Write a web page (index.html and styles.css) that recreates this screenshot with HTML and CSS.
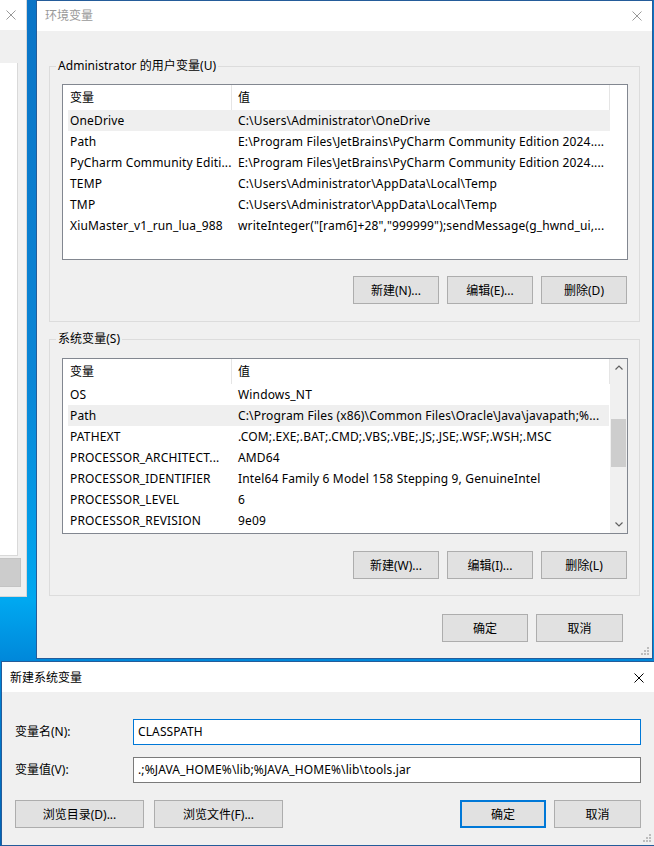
FILE: index.html
```html
<!DOCTYPE html>
<html lang="zh-CN">
    <head>
        <meta charset="utf-8" />
        <title>环境变量</title>
        <link rel="stylesheet" href="styles.css">
    </head>
    <body>
        <div class="desktop">
            <!-- window behind, mostly hidden -->
            <div class="window window-back">
                <div class="titlebar">
                    <svg class="close close-dim" width="10" height="10" viewBox="0 0 10 10"><path d="M0.5 0.5L9.5 9.5M9.5 0.5L0.5 9.5" /></svg>
                </div>
                <div class="back-panel"></div>
                <div class="back-button"></div>
            </div>

            <div class="window window-env">
                <div class="titlebar">
                    <span class="title title-dim">环境变量</span>
                    <svg class="close close-dim" width="10" height="10" viewBox="0 0 10 10"><path d="M0.5 0.5L9.5 9.5M9.5 0.5L0.5 9.5" /></svg>
                </div>
                <div class="env-body">
                    <div class="group group-user">
                        <div class="group-title">Administrator 的用户变量(U)</div>
                        <div class="listview">
                            <div class="list-main">
                                <div class="list-header">
                                    <div class="col-name">变量</div>
                                    <div class="col-value">值</div>
                                </div>
                                <div class="list-rows">
                                    <div class="row selected"><div class="cell-name">OneDrive</div><div class="cell-value">C:\Users\Administrator\OneDrive</div></div>
                                    <div class="row"><div class="cell-name">Path</div><div class="cell-value">E:\Program Files\JetBrains\PyCharm Community Edition 2024....</div></div>
                                    <div class="row"><div class="cell-name">PyCharm Community Editi...</div><div class="cell-value">E:\Program Files\JetBrains\PyCharm Community Edition 2024....</div></div>
                                    <div class="row"><div class="cell-name">TEMP</div><div class="cell-value">C:\Users\Administrator\AppData\Local\Temp</div></div>
                                    <div class="row"><div class="cell-name">TMP</div><div class="cell-value">C:\Users\Administrator\AppData\Local\Temp</div></div>
                                    <div class="row"><div class="cell-name">XiuMaster_v1_run_lua_988</div><div class="cell-value">writeInteger("[ram6]+28","999999");sendMessage(g_hwnd_ui,...</div></div>
                                </div>
                            </div>
                        </div>
                        <div class="button-row">
                            <button>新建(N)...</button>
                            <button>编辑(E)...</button>
                            <button>删除(D)</button>
                        </div>
                    </div>

                    <div class="group group-system">
                        <div class="group-title">系统变量(S)</div>
                        <div class="listview">
                            <div class="list-main">
                                <div class="list-header">
                                    <div class="col-name">变量</div>
                                    <div class="col-value">值</div>
                                </div>
                                <div class="list-rows">
                                    <div class="row"><div class="cell-name">OS</div><div class="cell-value">Windows_NT</div></div>
                                    <div class="row selected"><div class="cell-name">Path</div><div class="cell-value">C:\Program Files (x86)\Common Files\Oracle\Java\javapath;%...</div></div>
                                    <div class="row"><div class="cell-name">PATHEXT</div><div class="cell-value">.COM;.EXE;.BAT;.CMD;.VBS;.VBE;.JS;.JSE;.WSF;.WSH;.MSC</div></div>
                                    <div class="row"><div class="cell-name">PROCESSOR_ARCHITECT...</div><div class="cell-value">AMD64</div></div>
                                    <div class="row"><div class="cell-name">PROCESSOR_IDENTIFIER</div><div class="cell-value">Intel64 Family 6 Model 158 Stepping 9, GenuineIntel</div></div>
                                    <div class="row"><div class="cell-name">PROCESSOR_LEVEL</div><div class="cell-value">6</div></div>
                                    <div class="row"><div class="cell-name">PROCESSOR_REVISION</div><div class="cell-value">9e09</div></div>
                                </div>
                            </div>
                            <div class="scrollbar">
                                <div class="scroll-arrow">
                                    <svg width="8" height="5" viewBox="0 0 8 5"><path d="M0.5 4.5L4 1L7.5 4.5" /></svg>
                                </div>
                                <div class="scroll-track"><div class="scroll-thumb"></div></div>
                                <div class="scroll-arrow">
                                    <svg width="8" height="5" viewBox="0 0 8 5"><path d="M0.5 0.5L4 4L7.5 0.5" /></svg>
                                </div>
                            </div>
                        </div>
                        <div class="button-row">
                            <button>新建(W)...</button>
                            <button>编辑(I)...</button>
                            <button>删除(L)</button>
                        </div>
                    </div>

                    <div class="dialog-buttons">
                        <button>确定</button>
                        <button class="wide">取消</button>
                    </div>
                </div>
                <svg class="grip" width="9" height="9" viewBox="0 0 9 9">
                    <rect x="6" y="0" width="2" height="2" /><rect x="3" y="3" width="2" height="2" /><rect x="6" y="3" width="2" height="2" />
                    <rect x="0" y="6" width="2" height="2" /><rect x="3" y="6" width="2" height="2" /><rect x="6" y="6" width="2" height="2" />
                </svg>
            </div>

            <div class="window window-new">
                <div class="titlebar">
                    <span class="title">新建系统变量</span>
                    <svg class="close" width="10" height="10" viewBox="0 0 10 10"><path d="M0.5 0.5L9.5 9.5M9.5 0.5L0.5 9.5" /></svg>
                </div>
                <div class="new-body">
                    <div class="field-row">
                        <label class="field-label">变量名(N):</label>
                        <div class="field-input focused">CLASSPATH</div>
                    </div>
                    <div class="field-row">
                        <label class="field-label">变量值(V):</label>
                        <div class="field-input">.;%JAVA_HOME%\lib;%JAVA_HOME%\lib\tools.jar</div>
                    </div>
                    <div class="new-buttons">
                        <button class="browse">浏览目录(D)...</button>
                        <button class="browse">浏览文件(F)...</button>
                        <button class="default">确定</button>
                        <button class="wide">取消</button>
                    </div>
                </div>
                <svg class="grip" width="9" height="9" viewBox="0 0 9 9">
                    <rect x="6" y="0" width="2" height="2" /><rect x="3" y="3" width="2" height="2" /><rect x="6" y="3" width="2" height="2" />
                    <rect x="0" y="6" width="2" height="2" /><rect x="3" y="6" width="2" height="2" /><rect x="6" y="6" width="2" height="2" />
                </svg>
            </div>
        </div>
    </body>
</html>
```

FILE: styles.css
```css
* {
    margin: 0;
    padding: 0;
    box-sizing: border-box;
}
body {
    width: 654px;
    height: 846px;
    overflow: hidden;
    font-family: "Noto Sans", "Noto Sans CJK SC", sans-serif;
    font-size: 12px;
    line-height: 16px;
    color: #000;
}
.desktop {
    position: relative;
    width: 654px;
    height: 846px;
    overflow: hidden;
    background: linear-gradient(180deg, #0a74c6 0%, #0a86d6 45%, #00a8f0 71%, #0088da 78%, #0062b4 100%);
}
/* windows */
.window {
    position: absolute;
    background-color: #f0f0f0;
}
.window-back {
    left: -10px;
    top: 0;
    width: 37px;
    height: 597px;
    border-right: 1px solid #d6d6d6;
    border-bottom: 1px solid #d6d6d6;
}
.window-env {
    left: 36px;
    top: 0;
    width: 617px;
    height: 659px;
    border: 1px solid #245c9a;
}
.window-new {
    left: 1px;
    top: 661px;
    width: 654px;
    height: 185px;
    border: 1px solid #245c9a;
}
.titlebar {
    display: flex;
    align-items: center;
    justify-content: space-between;
    height: 30px;
    padding: 0 10px 0 8px;
    background-color: #fff;
}
.window-back .titlebar {
    justify-content: flex-end;
    padding-right: 10px;
}
.window-new .titlebar {
    padding-top: 1px;
}
.title {
    color: #000;
}
.title-dim {
    color: #999;
}
.close path {
    stroke: #000;
    stroke-width: 1;
    fill: none;
}
.close-dim path {
    stroke: #999;
}
.grip {
    position: absolute;
    right: 2px;
    bottom: 2px;
    fill: #bdbdbd;
}
/* background window */
.back-panel {
    width: 28px;
    height: 493px;
    margin-top: 33px;
    background-color: #fff;
    border-right: 1px solid #d9d9d9;
    border-bottom: 1px solid #d9d9d9;
}
.back-button {
    width: 31px;
    height: 29px;
    margin-top: 2px;
    background-color: #ccc;
    border: 1px solid #c4c4c4;
}
/* environment dialog */
.env-body {
    padding: 0 12px;
}
.group {
    border: 1px solid #dcdcdc;
    padding: 0 11px 17px 12px;
}
.group-user {
    margin-top: 35px;
}
.group-system {
    margin-top: 17px;
    padding-bottom: 16px;
}
.group-title {
    width: max-content;
    margin: -9px 0 0 -6px;
    padding: 0 2px;
    background-color: #f0f0f0;
    letter-spacing: 0.05px;
}
.listview {
    display: flex;
    height: 176px;
    margin-top: 10px;
    border: 1px solid #828790;
    background-color: #fff;
}
.group-system .listview {
    margin-top: 11px;
}
.list-main {
    width: 548px;
}
.list-header {
    display: flex;
    height: 25px;
    line-height: 25px;
}
.col-name {
    width: 169px;
    padding-left: 7px;
    border-right: 1px solid #e5e5e5;
}
.col-value {
    width: 378px;
    padding-left: 6px;
    border-right: 1px solid #e5e5e5;
}
.list-rows {
    padding-left: 5px;
    padding-right: 1px;
}
.row {
    display: flex;
    height: 21px;
    line-height: 21px;
    white-space: nowrap;
    letter-spacing: 0.16px;
}
.row.selected {
    background-color: #efefef;
}
.cell-name {
    width: 168px;
    padding-left: 2px;
    overflow: hidden;
}
.cell-value {
    flex: 1;
    padding-left: 2px;
    overflow: hidden;
}
.scrollbar {
    display: flex;
    flex-direction: column;
    width: 17px;
    margin-left: auto;
    background-color: #f0f0f0;
}
.scroll-arrow {
    display: flex;
    align-items: center;
    justify-content: center;
    height: 17px;
}
.scroll-arrow path {
    stroke: #606060;
    stroke-width: 1.2;
    fill: none;
}
.scroll-track {
    flex: 1;
}
.scroll-thumb {
    height: 48px;
    margin: 43px 1px 0 1px;
    background-color: #cdcdcd;
}
.button-row {
    display: flex;
    justify-content: flex-end;
    gap: 8px;
    margin-top: 16px;
    padding-right: 1px;
}
.group-system .button-row {
    margin-top: 17px;
}
button {
    width: 86px;
    height: 28px;
    border: 1px solid #adadad;
    background-color: #e1e1e1;
    font-family: inherit;
    font-size: 12px;
    color: #000;
}
button.wide {
    width: 87px;
}
.dialog-buttons {
    display: flex;
    justify-content: flex-end;
    gap: 8px;
    margin-top: 18px;
    padding-right: 17px;
}
/* new variable dialog */
.new-body {
    padding: 27px 13px 0 13px;
}
.field-row {
    display: flex;
    align-items: center;
    height: 26px;
}
.field-row + .field-row {
    margin-top: 12px;
}
.field-label {
    width: 118px;
}
.field-input {
    flex: 1;
    height: 26px;
    line-height: 24px;
    padding-left: 4px;
    border: 1px solid #7a7a7a;
    background-color: #fff;
    white-space: nowrap;
    letter-spacing: 0.12px;
}
.field-input.focused {
    border-color: #0078d7;
}
.new-buttons {
    display: flex;
    gap: 10px;
    margin-top: 17px;
}
.new-buttons .browse {
    width: 129px;
}
.new-buttons .default {
    margin-left: auto;
    margin-right: -2px;
    border: 2px solid #0078d7;
}
```
